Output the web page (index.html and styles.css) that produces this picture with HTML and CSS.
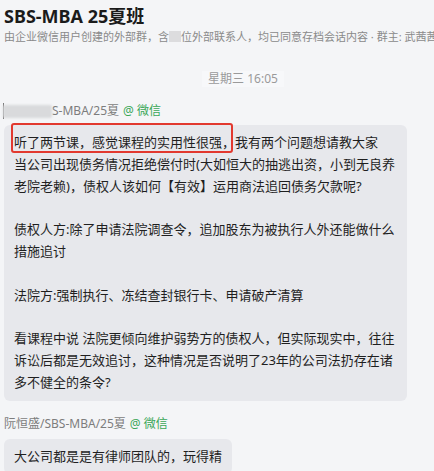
FILE: index.html
```html
<!DOCTYPE html>
<html lang="zh-CN">
<head>
<meta charset="utf-8">
<title>SBS-MBA 25夏班</title>
<link rel="stylesheet" href="styles.css">
</head>
<body>
<div class="page">
  <header class="head">
    <h1 class="title">SBS-MBA 25夏班</h1>
    <p class="sub">由企业微信用户创建的外部群，含<span class="blur-sq"></span>位外部联系人，均已同意存档会话内容 · 群主: 武茜茜</p>
  </header>

  <div class="date"><span class="date-pill">星期三 16:05</span></div>

  <div class="msg">
    <div class="name"><span class="caret"></span><span class="blur-name"></span>S-MBA/25夏 <span class="src">@ 微信</span></div>
    <div class="bubble-wrap">
      <div class="bubble wide">
        <p>听了两节课，感觉课程的实用性很强，我有两个问题想请教大家<br>当公司出现债务情况拒绝偿付时(大如恒大的抽逃出资，小到无良养<br>老院老赖)，债权人该如何【有效】运用商法追回债务欠款呢?</p>
        <p>&nbsp;</p>
        <p>债权人方:除了申请法院调查令，追加股东为被执行人外还能做什么<br>措施追讨</p>
        <p>&nbsp;</p>
        <p>法院方:强制执行、冻结查封银行卡、申请破产清算</p>
        <p>&nbsp;</p>
        <p>看课程中说 法院更倾向维护弱势方的债权人，但实际现实中，往往<br>诉讼后都是无效追讨，这种情况是否说明了23年的公司法扔存在诸<br>多不健全的条令?</p>
      </div>
      <div class="mark"></div>
    </div>
  </div>

  <div class="msg second">
    <div class="name">阮恒盛/SBS-MBA/25夏 <span class="src">@ 微信</span></div>
    <div class="bubble">
      <p>大公司都是是有律师团队的，玩得精</p>
    </div>
  </div>
</div>
</body>
</html>
```

FILE: styles.css
```css
* { box-sizing: border-box; }

html, body {
  margin: 0;
  padding: 0;
  background: #f4f5f7;
  overflow: hidden;
}

body {
  font-family: "Noto Sans", "Noto Sans CJK SC", sans-serif;
  color: #1f1f1f;
}

.page {
  padding: 4px 0 0 4px;
  height: 471px;
  overflow: hidden;
}

.head {
  white-space: nowrap;
  overflow: hidden;
}

.title {
  margin: 0;
  font-size: 18px;
  line-height: 24px;
  font-weight: 700;
  color: #1b1b1b;
}

.sub {
  margin: 1px 0 0;
  font-size: 11px;
  line-height: 16px;
  color: #8a8a8a;
}

.blur-sq {
  display: inline-block;
  width: 12px;
  height: 11px;
  background: #dcdcde;
  vertical-align: -1px;
  filter: blur(0.6px);
}

.date {
  display: flex;
  justify-content: center;
  margin-top: 26px;
  padding-right: 4px;
  margin-left: 52px;
}

.date-pill {
  font-size: 12px;
  line-height: 16px;
  color: #9a9a9a;
  padding: 0 6px;
  background: #f7f8fa;
}

.msg {
  margin-top: 16px;
}

.msg.second {
  margin-top: 15px;
}

.name {
  font-size: 12px;
  line-height: 16px;
  color: #7d7d7d;
  white-space: nowrap;
  display: flex;
  align-items: center;
}

.src {
  color: #3aa757;
  margin-left: 4px;
}

.caret {
  width: 1px;
  height: 16px;
  background: #777;
  margin-right: -1px;
  margin-left: -1px;
}

.blur-name {
  display: inline-block;
  width: 49px;
  height: 13px;
  background: #d9dadc;
  border-radius: 2px;
  filter: blur(0.8px);
}

.bubble-wrap {
  position: relative;
  margin-top: 6px;
}

.bubble {
  display: inline-block;
  background: #e7e8ec;
  border-radius: 6px;
  padding: 7px 10px;
  font-size: 13px;
  line-height: 21.8px;
  color: #1f1f1f;
  white-space: nowrap;
  margin-top: 7px;
}

.bubble-wrap .bubble {
  margin-top: 0;
}

.bubble.wide {
  display: block;
  width: 403px;
}

.bubble p {
  margin: 0;
}

.mark {
  position: absolute;
  left: 7px;
  top: -2px;
  width: 222px;
  height: 30px;
  border: 2px solid #e2392f;
  border-radius: 3px;
}
```
